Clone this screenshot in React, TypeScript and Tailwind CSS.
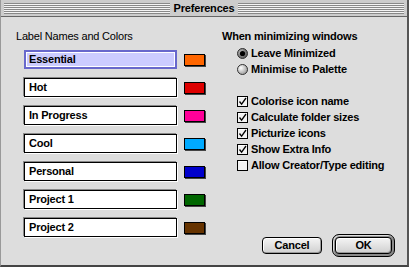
import React from "react";

const labels = [
  { name: "Essential", color: "bg-[#ff6600]", active: true },
  { name: "Hot", color: "bg-[#dd0000]" },
  { name: "In Progress", color: "bg-[#ff0099]" },
  { name: "Cool", color: "bg-[#00aaff]" },
  { name: "Personal", color: "bg-[#0000cc]" },
  { name: "Project 1", color: "bg-[#006600]" },
  { name: "Project 2", color: "bg-[#663300]" },
];

const checks = [
  { label: "Colorise icon name", on: true },
  { label: "Calculate folder sizes", on: true },
  { label: "Picturize icons", on: true },
  { label: "Show Extra Info", on: true },
  { label: "Allow Creator/Type editing", on: false },
];

function Radio({ on }: { on: boolean }) {
  return (
    <svg width="11" height="11" viewBox="0 0 11 11" className="shrink-0">
      <defs>
        <radialGradient id={on ? "rOn" : "rOff"} cx="0.35" cy="0.35" r="0.7">
          <stop offset="0" stopColor={on ? "#bbbbbb" : "#ffffff"} />
          <stop offset="1" stopColor={on ? "#555555" : "#999999"} />
        </radialGradient>
      </defs>
      <circle cx="5.5" cy="5.5" r="5" fill={`url(#${on ? "rOn" : "rOff"})`} stroke="#333" strokeWidth="1" />
      {on && <circle cx="5.5" cy="5.5" r="2.6" fill="#000" />}
    </svg>
  );
}

function Check({ on }: { on: boolean }) {
  return (
    <svg width="11" height="11" viewBox="0 0 11 11" className="shrink-0">
      <rect x="0.5" y="0.5" width="10" height="10" fill="#f2f2f2" stroke="#000" />
      <path d="M1.5 1.5h8" stroke="#fff" />
      {on && <path d="M2.5 5.5 L4.6 8.2 L9 2" fill="none" stroke="#000" strokeWidth="1.3" />}
    </svg>
  );
}

export default function App() {
  return (
    <div className="w-[409px] h-[267px] flex flex-col bg-[#dddddd] border-l border-l-[#999999] border-r-2 border-r-[#555555] border-b-2 border-b-[#444444] font-['Liberation_Sans',Arial,sans-serif] text-black text-[11px] tracking-[-0.2px] select-none">
      {/* Title bar */}
      <div className="h-[17px] shrink-0 bg-[#cccccc] border-b border-[#666666] flex items-center px-[3px]">
        <div className="flex-1 h-[11px] bg-[repeating-linear-gradient(to_bottom,#888888_0,#888888_1px,#f4f4f4_1px,#f4f4f4_2px)]" />
        <span className="px-[4px] font-bold text-[11px] leading-[16px]">Preferences</span>
        <div className="flex-1 h-[11px] bg-[repeating-linear-gradient(to_bottom,#888888_0,#888888_1px,#f4f4f4_1px,#f4f4f4_2px)]" />
      </div>

      <div className="flex-1 flex pt-[13px]">
        {/* Left column */}
        <div className="w-[221px] shrink-0 pl-[15px] flex flex-col">
          <div className="h-[13px] leading-[13px]">Label Names and Colors</div>
          <div className="mt-[7px] ml-[8px] flex flex-col gap-[9px]">
            {labels.map((l) =>
              <div key={l.name} className="flex items-center">
                {l.active ? (
                  <div className="w-[153px] h-[19px] border-2 border-[#6868cc] bg-white p-[1px]">
                    <div className="h-full bg-[#ccccff] pl-[2px] font-bold leading-[13px]">{l.name}</div>
                  </div>
                ) : (
                  <div className="w-[153px] h-[19px] border border-black bg-white shadow-[-1px_-1px_0_#888888,1px_1px_0_#ffffff] pl-[4px] font-bold leading-[17px]">
                    {l.name}
                  </div>
                )}
                <div className={`ml-[7px] w-[21px] h-[12px] border border-black shadow-[1px_1px_0_#444444] ${l.color}`} />
              </div>
            )}
          </div>
        </div>

        {/* Right column */}
        <div className="flex-1 flex flex-col pr-[12px] pb-[8px]">
          <div className="h-[13px] leading-[13px] font-bold">When minimizing windows</div>
          <div className="mt-[2px] pl-[15px] flex flex-col">
            <div className="h-[16px] flex items-center gap-[3px] font-bold">
              <Radio on={true} />Leave Minimized
            </div>
            <div className="h-[16px] flex items-center gap-[3px] font-bold">
              <Radio on={false} />Minimise to Palette
            </div>
            <div className="h-[16px]" />
            {checks.map((c) =>
              <div key={c.label} className="h-[16px] flex items-center gap-[3px] font-bold">
                <Check on={c.on} />{c.label}
              </div>
            )}
          </div>

          <div className="mt-auto flex items-center justify-end gap-[10px]">
            <button className="w-[60px] h-[17px] rounded-[4px] border border-black bg-[linear-gradient(#f4f4f4,#d0d0d0)] shadow-[inset_1px_1px_0_#ffffff,inset_-1px_-1px_0_#999999] font-bold text-[11px] leading-[15px]">
              Cancel
            </button>
            <div className="w-[63px] h-[23px] rounded-[7px] border border-black bg-[#8a8a8a] p-[2px] shadow-[inset_1px_1px_0_#dddddd]">
              <button className="w-full h-full rounded-[4px] border border-black bg-[linear-gradient(#f4f4f4,#d0d0d0)] shadow-[inset_1px_1px_0_#ffffff,inset_-1px_-1px_0_#999999] font-bold text-[11px] leading-[15px]">
                OK
              </button>
            </div>
          </div>
        </div>
      </div>
    </div>
  );
}
